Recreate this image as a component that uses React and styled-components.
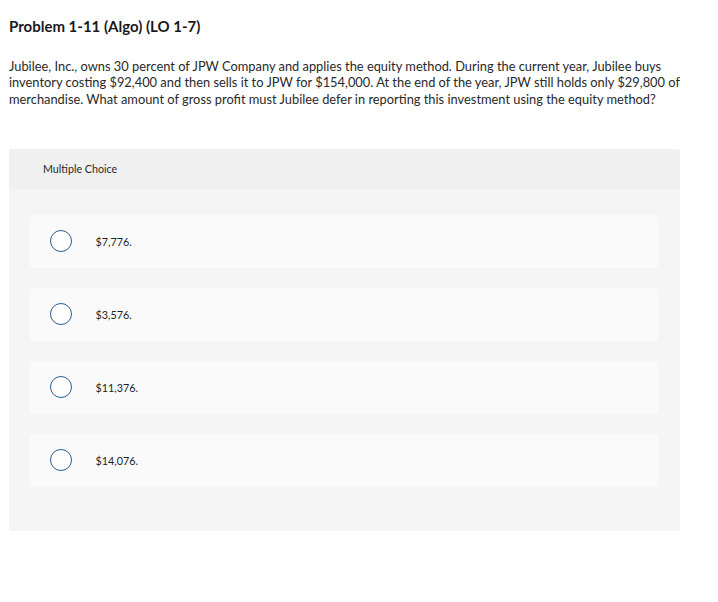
import React from "react";
import styled, { createGlobalStyle } from "styled-components";

const Global = createGlobalStyle`
  html, body { margin: 0; padding: 0; background: #ffffff; }
  body { font-family: Lato, "Open Sans", Arial, sans-serif; color: #1f1f1f; }
`;

const Page = styled.div`
  padding: 17px 38px 0 9px;
  width: 671px;
`;

const Title = styled.h1`
  margin: 0;
  font-size: 15px;
  font-weight: 700;
  color: #1a1a1a;
  line-height: 18px;
`;

const Prompt = styled.p`
  margin: 23px 0 0 0;
  width: 685px;
  font-size: 12.85px;
  line-height: 16.3px;
  color: #2a2a2a;
`;

const Panel = styled.section`
  margin-top: 42px;
  background: #f5f5f5;
  border-radius: 2px;
  padding-bottom: 44px;
`;

const PanelHeader = styled.div`
  height: 40px;
  background: #f0f0f0;
  display: flex;
  align-items: center;
  padding-left: 34px;
  font-size: 10.7px;
  color: #2a2a2a;
  border-radius: 2px 2px 0 0;
`;

const Options = styled.div`
  display: flex;
  flex-direction: column;
  gap: 20px;
  padding: 26px 22px 0 21px;
`;

const Option = styled.label`
  display: flex;
  align-items: center;
  height: 53px;
  background: #fafafa;
  border-radius: 3px;
  padding-left: 20px;
  cursor: pointer;
`;

const Radio = styled.span`
  width: 20px;
  height: 20px;
  border: 1.5px solid #2b5d8f;
  border-radius: 50%;
  background: #ffffff;
  flex: none;
`;

const OptionText = styled.span`
  margin-left: 23.5px;
  font-size: 10.8px;
  color: #1f1f1f;
`;

const choices = ["$7,776.", "$3,576.", "$11,376.", "$14,076."];

export default function App() {
  return (
    <>
      <Global />
      <Page>
        <Title>Problem 1-11 (Algo) (LO 1-7)</Title>
        <Prompt>
          Jubilee, Inc., owns 30 percent of JPW Company and applies the equity method. During the current year, Jubilee buys
          inventory costing $92,400 and then sells it to JPW for $154,000. At the end of the year, JPW still holds only $29,800 of
          merchandise. What amount of gross profit must Jubilee defer in reporting this investment using the equity method?
        </Prompt>
        <Panel>
          <PanelHeader>Multiple Choice</PanelHeader>
          <Options>
            {choices.map((c) => (
              <Option key={c}>
                <Radio />
                <OptionText>{c}</OptionText>
              </Option>
            ))}
          </Options>
        </Panel>
      </Page>
    </>
  );
}
